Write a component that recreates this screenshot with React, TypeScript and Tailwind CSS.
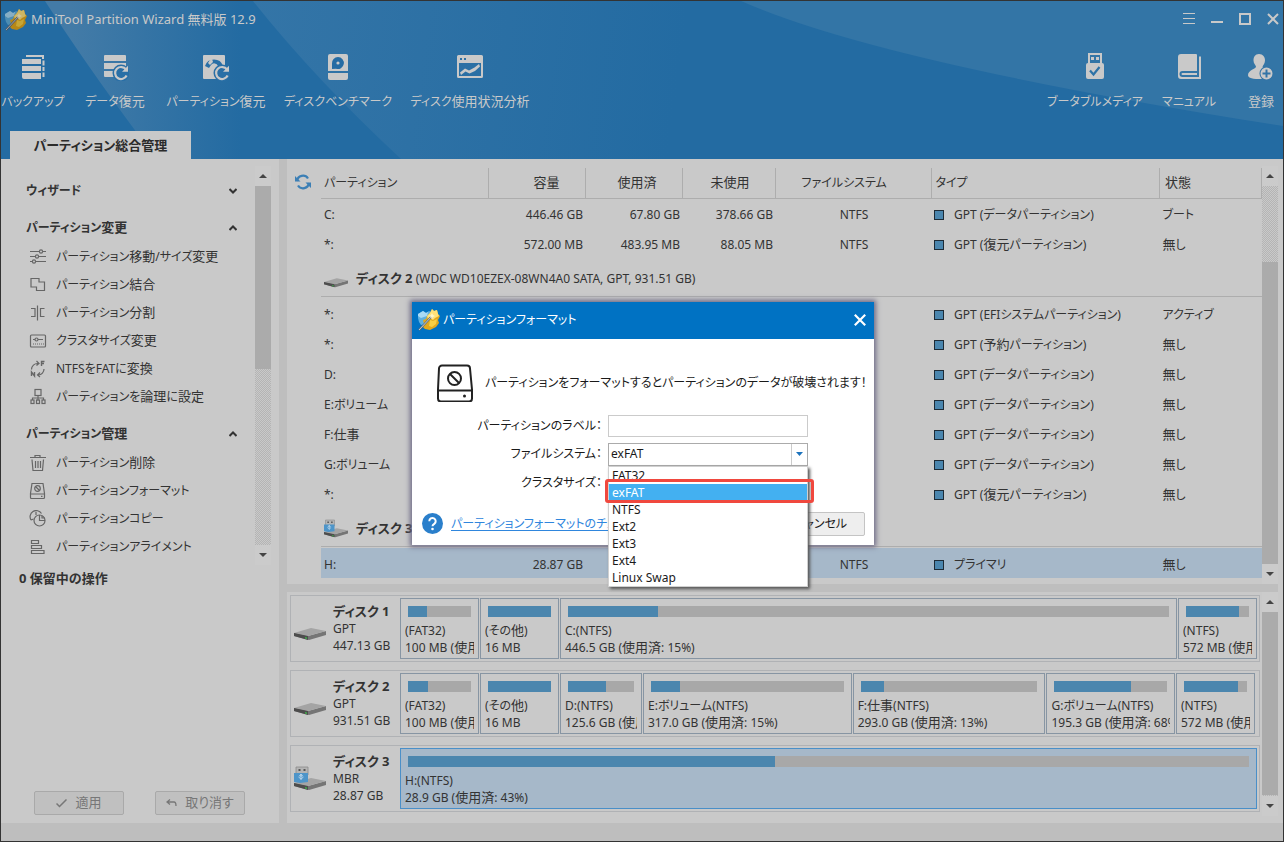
import React, { Fragment } from "react";
import type { ReactNode } from "react";

/* Kanji runs are set one pixel larger than the kana and Latin around them. */
function T({ children }: { children: string }) {
  const runs = children.split(/([\u4e00-\u9fff]+)/);
  return (
    <>
      {runs.map((run, i) =>
        i % 2 ? (
          <span key={i} className="text-[13px] leading-none">
            {run}
          </span>
        ) : (
          <Fragment key={i}>{run}</Fragment>
        ),
      )}
    </>
  );
}

function Logo({ bright = false }: { bright?: boolean }) {
  return (
    <svg width="24" height="24" viewBox="0 0 24 24" className={bright ? "shrink-0" : "shrink-0 brightness-80"} aria-hidden="true">
      <path d="M1 6l5-3 3 2 3-2 2 1v6l-4 6-6 1-2-3-1-4z" fill="#5fb0e0" />
      <path d="M1 6l5-3 3 2 2-1-1 4-6 2-3-2z" fill="#a9daf5" />
      <path d="M6 12l3-1 1-3 3-3 2-4 2 2 3-1 1 4 2 2-2 4 1 3-3 4-6 3-5-1-3-3 2-2z" fill="#e3a91c" />
      <path d="M10 8l3-3 2-4 2 2 3-1 1 4 1 2-4 2-2 2-3-2-2 1z" fill="#ffe27a" />
      <path d="M13 12l3 1 4-2-1 5-4 3-3-1z" fill="#f7cf43" />
      <path d="M2 22L15 8" stroke="#5e6a76" strokeWidth="2" />
      <path d="M2 22L15 8" stroke="#dfe7ee" strokeWidth=".8" />
      <path d="M15 5l1 2 2 1-2 1-1 2-1-2-2-1 2-1z" fill="#fff6c8" />
    </svg>
  );
}

function ToolIcon({ children }: { children: ReactNode }) {
  return (
    <svg width="28" height="28" viewBox="0 0 28 28" fill="#c9c9c9" aria-hidden="true">
      {children}
    </svg>
  );
}

const restoreArrow = (
  <>
    <circle cx="20" cy="20" r="8.5" fill="#296fa6" />
    <path d="M25 16.5A6 6 0 1 0 25.6 22.5" fill="none" stroke="#c9c9c9" strokeWidth="2.2" />
    <path d="M27 12.8v6h-6z" />
  </>
);

const toolsLeft: { label: string; width: string; icon: ReactNode }[] = [
  {
    label: "バックアップ",
    width: "w-[64px]",
    icon: (
      <>
        <path d="M7 2h18v4h-2V4H7z" />
        <path d="M3 6h19v5H3zM3 13h19v5H3zM3 20h19v6H5a2 2 0 0 1-2-2z" />
        <path d="M23.500 7.500H25.500v5h-2zM23.500 14H25.500v4h-2zM23.500 19.500H25.500V24h-2z" />
      </>
    ),
  },
  {
    label: "データ復元",
    width: "w-[100px]",
    icon: (
      <>
        <path d="M3 3a1 1 0 0 1 1-1h20a1 1 0 0 1 1 1v5H3zM3 10h22v6H3zM3 18h22v6H4a1 1 0 0 1-1-1z" />
        {restoreArrow}
      </>
    ),
  },
  {
    label: "パーティション復元",
    width: "w-[102px]",
    icon: (
      <>
        <path d="M1 3a1 1 0 0 1 1-1h20a1 1 0 0 1 1 1v23H2a1 1 0 0 1-1-1z" />
        <path d="M3 13a9.500 9.500 0 0 1 18 0h-5a4 4 0 0 0-7-1l-2 3z" fill="#296fa6" />
        <circle cx="12.500" cy="13" r="1.600" />
        <path d="M6 10a8 8 0 0 1 4-4l1 3-3 3z" />
        {restoreArrow}
      </>
    ),
  },
  {
    label: "ディスクベンチマーク",
    width: "w-[142px]",
    icon: (
      <>
        <path d="M4 3a2 2 0 0 1 2-2h16a2 2 0 0 1 2 2v15H4zM4 20h20v5a2 2 0 0 1-2 2H6a2 2 0 0 1-2-2z" />
        <path d="M14 4a6 6 0 1 1-2 11.700L8 16v-5.500A6 6 0 0 1 14 4z" fill="#256ca4" />
        <circle cx="14" cy="10" r="1.600" />
      </>
    ),
  },
  {
    label: "ディスク使用状況分析",
    width: "w-[122px]",
    icon: (
      <path
        fillRule="evenodd"
        d="M1 3.500A1.500 1.500 0 0 1 2.500 2h23A1.500 1.500 0 0 1 27 3.500v20a1.500 1.500 0 0 1-1.500 1.500h-23A1.500 1.500 0 0 1 1 23.500zM3 10v13h22V10zM4 5v2h2V5zM8 5v2h2V5zM4 19.500l5-4 4 2 5.500-3L23 11l1 2.500-5 4.500-5.500 2.500-4-2L5 22z"
      />
    ),
  },
];

const toolsRight: { label: string; width: string; icon: ReactNode }[] = [
  {
    label: "ブータブルメディア",
    width: "w-[106px]",
    icon: (
      <>
        <path fillRule="evenodd" d="M7 0h14v11H7zM9 2v8h10V2zM10 4h3v3h-3zM15 4h3v3h-3z" />
        <path d="M5 12a2 2 0 0 1 2-2h14a2 2 0 0 1 2 2v12a2 2 0 0 1-2 2H7a2 2 0 0 1-2-2z" />
        <path d="M9 17.500l3.500 4L18.500 14" fill="none" stroke="#2e72a6" strokeWidth="2.200" />
      </>
    ),
  },
  {
    label: "マニュアル",
    width: "w-[82px]",
    icon: (
      <path
        fillRule="evenodd"
        d="M3 4a3 3 0 0 1 3-3h15a1 1 0 0 1 1 1v16H7.500a3 3 0 0 0 0 6H24V3.500h2V26H6a3 3 0 0 1-3-3zM7.500 20H22v2H7.500a1 1 0 0 1 0-2z"
      />
    ),
  },
  {
    label: "登録",
    width: "w-[62px]",
    icon: (
      <>
        <path d="M12 1c4 0 6 3 6 6.500 0 3-2 4.500-2.500 6.500-.3 2 8.500 3 8.500 8 0 2-3 4-12 4S1 24 1 22c0-5 8-6 8-8.500C8.500 11.500 6.500 10.500 6.500 7.500 6.500 4 8 1 12 1z" />
        <circle cx="19.500" cy="20.500" r="7" fill="#3374a6" />
        <path
          fillRule="evenodd"
          d="M19.500 14.500a6 6 0 1 1 0 12 6 6 0 0 1 0-12zM18.500 16.500v3h-3v2h3v3h2v-3h3v-2h-3v-3z"
        />
      </>
    ),
  },
];

function ToolButton({ label, width, icon }: { label: string; width: string; icon: ReactNode }) {
  return (
    <button className={`flex flex-col items-center gap-3 whitespace-nowrap text-xs leading-[18px] ${width}`}>
      <ToolIcon>{icon}</ToolIcon>
      <span>
        <T>{label}</T>
      </span>
    </button>
  );
}

function Header() {
  return (
    <header className="relative bg-[#236ba2] text-[#c9c9c9]">
      <svg className="absolute inset-0 h-full w-full" viewBox="0 0 1282 158" preserveAspectRatio="none" aria-hidden="true">
        <defs>
          <linearGradient id="beamA" gradientUnits="userSpaceOnUse" x1="70" y1="0" x2="240" y2="0">
            <stop offset="0" stopColor="#437ba7" />
            <stop offset="1" stopColor="#236ba2" />
          </linearGradient>
          <linearGradient id="beamB" gradientUnits="userSpaceOnUse" x1="250" y1="0" x2="680" y2="60">
            <stop offset="0" stopColor="#3475a7" />
            <stop offset="1" stopColor="#236ba2" />
          </linearGradient>
        </defs>
        <path d="M44 0Q84 62 136 132L150 158H252V0z" fill="url(#beamA)" />
        <path d="M252 0Q314 78 400 158H700V0z" fill="url(#beamB)" />
        <path d="M740 0Q880 62 1282 125V0z" fill="#3375a6" />
      </svg>
      <div className="relative">
        <div className="flex h-9 items-center justify-between pr-1 pl-[3px]">
          <div className="flex items-center gap-[3px] pt-0.5 text-[13px]">
            <Logo />
            <h1>MiniTool Partition Wizard 無料版 12.9</h1>
          </div>
          <div className="flex gap-4">
            <button aria-label="メニュー">
              <svg width="12" height="12" viewBox="0 0 12 12" stroke="currentColor">
                <path d="M0 .5h12M0 5.500h12M0 10.500h12" />
              </svg>
            </button>
            <button aria-label="最小化">
              <svg width="12" height="12" viewBox="0 0 12 12" stroke="currentColor" strokeWidth="2">
                <path d="M0 9h12" />
              </svg>
            </button>
            <button aria-label="最大化">
              <svg width="12" height="12" viewBox="0 0 12 12" fill="none" stroke="currentColor" strokeWidth="2">
                <path d="M1 1h10v10H1z" />
              </svg>
            </button>
            <button aria-label="閉じる">
              <svg width="12" height="12" viewBox="0 0 12 12" stroke="currentColor" strokeWidth="2">
                <path d="M1 1l10 10M11 1L1 11" />
              </svg>
            </button>
          </div>
        </div>
        <div className="flex items-start justify-between pt-4">
          <div className="flex">
            {toolsLeft.map((t) => (
              <ToolButton key={t.label} {...t} />
            ))}
          </div>
          <div className="-mr-[9px] flex">
            {toolsRight.map((t) => (
              <ToolButton key={t.label} {...t} />
            ))}
          </div>
        </div>
        <div className="flex px-[9px] pt-5">
          <button className="h-7 w-[181px] bg-[#c9c9c9] pt-0.5 text-[13px] font-bold text-[#2b2b2b]">
            パーティション総合管理
          </button>
        </div>
      </div>
    </header>
  );
}

function SideIcon({ children }: { children: ReactNode }) {
  return (
    <svg
      width="18"
      height="18"
      viewBox="0 0 18 18"
      fill="none"
      stroke="#666"
      strokeWidth="1.200"
      className="shrink-0"
      aria-hidden="true"
    >
      {children}
    </svg>
  );
}

const changeItems: { label: string; icon: ReactNode }[] = [
  {
    label: "パーティション移動/サイズ変更",
    icon: (
      <>
        <path d="M1 3.500h9M14 3.500h3M1 8.500h5M10 8.500h7M1 13.500h2M7 13.500h10" />
        <circle cx="12" cy="3.500" r="1.600" />
        <circle cx="8" cy="8.500" r="1.600" />
        <circle cx="5" cy="13.500" r="1.600" />
      </>
    ),
  },
  { label: "パーティション結合", icon: <path d="M2 2.500h8v3.500h5.500v8.500h-8V11H2z" /> },
  {
    label: "パーティション分割",
    icon: <path d="M8.500 1.500v15M2 4.500h4v8H2M15.500 4.500h-4v8h4" />,
  },
  {
    label: "クラスタサイズ変更",
    icon: (
      <>
        <rect x="1.500" y="3" width="15" height="12" rx="1" />
        <path d="M4 7.500h2M9 7.500h5" />
        <circle cx="7.500" cy="7.500" r="1.500" />
        <path d="M4 12h11" strokeDasharray="1 1" />
      </>
    ),
  },
  {
    label: "NTFSをFATに変換",
    icon: (
      <>
        <path d="M2.500 9.500A6 6 0 0 1 9 3.500M7.500 1l2.500 2.500-2.500 2M15 9a6 6 0 0 1-5.500 6M11 12.500L8.500 15l2.500 2" />
        <path d="M12.500 6V1.500h3M12.500 3.500h2.500M2.500 16v-4l3 4v-4" strokeWidth="1.400" />
      </>
    ),
  },
  {
    label: "パーティションを論理に設定",
    icon: (
      <>
        <rect x="6" y="1.500" width="6" height="6" />
        <path d="M9 7.500v5M3.500 12v-2h11v2" />
        <rect x="2" y="12" width="3" height="3.500" />
        <rect x="7.500" y="12" width="3" height="3.500" />
        <rect x="13" y="12" width="3" height="3.500" />
      </>
    ),
  },
];

const manageItems: { label: string; icon: ReactNode }[] = [
  {
    label: "パーティション削除",
    icon: <path d="M1 3.500h16M6 3.500v-2h5v2M3 5.500l1 11h9.500l1-11M6.500 7v7M9 7v7M11.500 7v7" />,
  },
  {
    label: "パーティションフォーマット",
    icon: (
      <>
        <path d="M3 1.500h11l1.500 10v4a1 1 0 0 1-1 1h-12a1 1 0 0 1-1-1v-4zM1.500 12h14M12 14.300h1.500" />
        <circle cx="8.500" cy="6.500" r="2.800" />
        <path d="M6.500 4.500l4 4" />
      </>
    ),
  },
  {
    label: "パーティションコピー",
    icon: (
      <>
        <path d="M2 10A5.500 5.500 0 0 1 12.500 3.500M2 10l2.500-1M7 2v3" />
        <circle cx="10.500" cy="10.500" r="5.500" />
        <path d="M10.500 5v5.500H16M13 5.500v2.500h3" />
      </>
    ),
  },
  {
    label: "パーティションアライメント",
    icon: <path d="M2.500 2.500h7v3h-7zM2.500 7.500h10v3h-10zM2.500 12.500h12.500v3H2.500z" />,
  },
];

function Chevron({ up }: { up?: boolean }) {
  return (
    <svg width="8" height="6" viewBox="0 0 8 6" fill="none" stroke="#333" strokeWidth="2" aria-hidden="true">
      <path d={up ? "M.5 5L4 1.500 7.500 5" : "M.5 1L4 4.500 7.500 1"} />
    </svg>
  );
}

function Section({ title, items }: { title: string; items?: { label: string; icon: ReactNode }[] }) {
  return (
    <section>
      <button className="flex h-7 w-full items-center justify-between pr-[18px] text-left font-bold">
        <span>
          <T>{title}</T>
        </span>
        <Chevron up={!!items} />
      </button>
      {items && (
        <ul className="mt-px pl-[3px]">
          {items.map((it) => (
            <li key={it.label}>
              <button className="flex h-7 w-full items-center gap-[9px] whitespace-nowrap text-left">
                <SideIcon>{it.icon}</SideIcon>
                <span>
                  <T>{it.label}</T>
                </span>
              </button>
            </li>
          ))}
        </ul>
      )}
    </section>
  );
}

function Triangle({ down }: { down?: boolean }) {
  return (
    <div className="flex h-5 shrink-0 items-center justify-center bg-[#cbcbcb]">
      <svg width="8" height="4" viewBox="0 0 8 4" fill="#444" aria-hidden="true">
        <path d={down ? "M0 0h8L4 4z" : "M0 4h8L4 0z"} />
      </svg>
    </div>
  );
}

const ditherClass =
  "w-full bg-[repeating-conic-gradient(#b4b4b4_0_25%,#c9c9c9_0_50%)] bg-[length:2px_2px]";

function ScrollBar({ before, thumb, after }: { before: number; thumb: number; after: number }) {
  return (
    <div className="flex w-4 shrink-0 flex-col" aria-hidden="true">
      <Triangle />
      <div className={ditherClass} style={{ flex: `${before} 0 0px` }} />
      <div className="w-full bg-[#ababab]" style={{ flex: `${thumb} 0 0px` }} />
      <div className={ditherClass} style={{ flex: `${after} 0 0px` }} />
      <Triangle down />
    </div>
  );
}

function Sidebar() {
  return (
    <aside className="flex w-[278px] shrink-0 flex-col">
      <div className="mt-[7px] flex pr-2">
        <nav className="flex flex-1 flex-col gap-[9px] pt-[11px] pb-1 pl-[25px] text-xs">
          <Section title="ウィザード" />
          <Section title="パーティション変更" items={changeItems} />
          <Section title="パーティション管理" items={manageItems} />
        </nav>
        <ScrollBar before={0} thumb={184} after={176} />
      </div>
      <p className="mt-px pl-[18px] text-[13px] leading-6 font-bold">0 保留中の操作</p>
      <div className="mt-auto mb-2 flex gap-[31px] pl-[33px] text-[13px] text-[#777]">
        <button className="flex h-6 w-[90px] items-center justify-center gap-2 rounded-xs border border-[#a9a9a9] bg-[#c0c0c0]">
          <svg width="11" height="9" viewBox="0 0 11 9" fill="none" stroke="currentColor" strokeWidth="1.500" aria-hidden="true">
            <path d="M.5 4.500l3 3 7-7" />
          </svg>
          適用
        </button>
        <button className="flex h-6 w-[90px] items-center justify-center gap-2 rounded-xs border border-[#a9a9a9] bg-[#c0c0c0]">
          <svg width="11" height="8" viewBox="0 0 11 8" fill="none" stroke="currentColor" strokeWidth="1.300" aria-hidden="true">
            <path d="M4 .5L1 3l3 2.500M1 3h7q2 0 2 4" />
          </svg>
          取り消す
        </button>
      </div>
    </aside>
  );
}

function DriveIcon({ usb, className }: { usb?: boolean; className: string }) {
  return (
    <svg viewBox="0 0 32 26" className={className} aria-hidden="true">
      <path d="M0 17l14 3 18-5v4l-17 5-15-4z" fill="#757575" />
      <path d="M0 17l17-5 15 3-18 5z" fill="#a4a4a4" />
      <path d="M0 17l14 3v4L0 20z" fill="#4d4d4d" />
      <path d="M11 21l2 .5v1.500l-2-.5z" fill="#3fae49" />
      {usb && (
        <>
          <path d="M2 1h12v8H2z" fill="#b5b5b5" stroke="#8b8b8b" strokeWidth=".8" />
          <path d="M4.500 3h2v2h-2zM9.500 3h2v2h-2z" fill="#555" />
          <path d="M0 7h14v9l-8 1-6-1z" fill="#4e95c9" />
          <path d="M7 8v6M7 8l-1.500 2h3zM4.500 11l2.500 2 2.500-2" stroke="#b7d4ea" fill="none" />
        </>
      )}
    </svg>
  );
}

type Row = { name: string; size?: string; used?: string; free?: string; fs?: string; type: string; state: string };

const disk1Rows: Row[] = [
  { name: "C:", size: "446.46 GB", used: "67.80 GB", free: "378.66 GB", fs: "NTFS", type: "GPT (データパーティション)", state: "ブート" },
  { name: "*:", size: "572.00 MB", used: "483.95 MB", free: "88.05 MB", fs: "NTFS", type: "GPT (復元パーティション)", state: "無し" },
];
const disk2Rows: Row[] = [
  { name: "*:", type: "GPT (EFIシステムパーティション)", state: "アクティブ" },
  { name: "*:", type: "GPT (予約パーティション)", state: "無し" },
  { name: "D:", type: "GPT (データパーティション)", state: "無し" },
  { name: "E:ボリューム", type: "GPT (データパーティション)", state: "無し" },
  { name: "F:仕事", type: "GPT (データパーティション)", state: "無し" },
  { name: "G:ボリューム", type: "GPT (データパーティション)", state: "無し" },
  { name: "*:", type: "GPT (復元パーティション)", state: "無し" },
];
const disk3Rows: Row[] = [{ name: "H:", size: "28.87 GB", fs: "NTFS", type: "プライマリ", state: "無し" }];

function PartRow({ row, selected }: { row: Row; selected?: boolean }) {
  return (
    <tr className={selected ? "h-[30px] bg-[#a6b8c9]" : "h-[30px]"}>
      <td className="pt-[3px] pl-[3px]">
        <T>{row.name}</T>
      </td>
      <td className="pt-[3px] pr-0.5 text-right">{row.size}</td>
      <td className="pt-[3px] pr-0.5 text-right">{row.used}</td>
      <td className="pt-[3px] pr-0.5 text-right">{row.free}</td>
      <td className="pt-[3px] pl-0.5 text-center">{row.fs}</td>
      <td className="pt-[3px] pl-[3px]">
        <div className="flex items-center gap-2.5">
          <span className="h-2.5 w-2.5 shrink-0 border border-[#1d2a35] bg-[#4b86ae]" />
          <span className="whitespace-nowrap">
            <T>{row.type}</T>
          </span>
        </div>
      </td>
      <td className="pt-[3px] pl-[3px]">
        <T>{row.state}</T>
      </td>
    </tr>
  );
}

function GroupRow({ name, info, usb }: { name: string; info: string; usb?: boolean }) {
  return (
    <tr className="h-10">
      <td colSpan={7} className="pb-px">
        <div className="flex h-[38px] items-center gap-2 border-b border-[#adadad] pt-1 pl-[3px]">
          <DriveIcon usb={usb} className="h-5 w-6" />
          <span>
            <b className="text-[13px]">{name}</b> {info}
          </span>
        </div>
      </td>
    </tr>
  );
}

function PartitionTable() {
  return (
    <div className="flex">
      <div className="flex min-w-0 flex-1">
        <button className="mt-[15px] ml-2 h-4 w-[26px] shrink-0" aria-label="最新の情報に更新">
          <svg width="16" height="16" viewBox="0 0 16 16" fill="none" stroke="#3c7fb5" strokeWidth="2.200">
            <path d="M2 7a6 6 0 0 1 11-2.500M14 9A6 6 0 0 1 3 11.500" />
            <path d="M0 2v5.500h5.500zM16 14V8.500h-5.500z" fill="#3c7fb5" stroke="none" />
          </svg>
        </button>
        <table className="mt-[9px] min-w-0 flex-1 table-fixed border-collapse text-xs">
          <colgroup>
            <col className="w-[167px]" />
            <col className="w-[97px]" />
            <col className="w-[97px]" />
            <col className="w-[93px]" />
            <col className="w-[156px]" />
            <col />
            <col className="w-[102px]" />
          </colgroup>
          <thead>
            <tr className="h-[30px] border-b border-[#adadad] text-left [&>th]:border-r [&>th]:border-[#adadad] [&>th]:pt-px [&>th]:font-normal">
              <th className="pl-[3px]">パーティション</th>
              <th className="pr-[25px] text-right">
                <T>容量</T>
              </th>
              <th className="pr-[25px] text-right">
                <T>使用済</T>
              </th>
              <th className="pr-[25px] text-right">
                <T>未使用</T>
              </th>
              <th className="pl-[26px]">ファイルシステム</th>
              <th className="pl-1">タイプ</th>
              <th className="pl-[5px]">
                <T>状態</T>
              </th>
            </tr>
          </thead>
          <tbody>
            {disk1Rows.map((r, i) => (
              <PartRow key={i} row={r} />
            ))}
            <GroupRow name="ディスク 2" info="(WDC WD10EZEX-08WN4A0 SATA, GPT, 931.51 GB)" />
            {disk2Rows.map((r, i) => (
              <PartRow key={i} row={r} />
            ))}
            <GroupRow name="ディスク 3" info="" usb />
            {disk3Rows.map((r, i) => (
              <PartRow key={i} row={r} selected />
            ))}
          </tbody>
        </table>
      </div>
      <div className="mt-[7px] mr-[5px] -mb-1.5 flex">
        <ScrollBar before={76} thumb={303} after={0} />
      </div>
    </div>
  );
}

type Part = { label: string; info: string; used: number; grow: string };
type Disk = { name: string; style: string; size: string; usb?: boolean; pad: string; parts: Part[] };

const disks: Disk[] = [
  {
    name: "ディスク 1",
    style: "GPT",
    size: "447.13 GB",
    pad: "pr-0.5",
    parts: [
      { label: "(FAT32)", info: "100 MB (使用済: 30%)", used: 30, grow: "w-[79px]" },
      { label: "(その他)", info: "16 MB", used: 100, grow: "w-[79px]" },
      { label: "C:(NTFS)", info: "446.5 GB (使用済: 15%)", used: 15, grow: "flex-1" },
      { label: "(NTFS)", info: "572 MB (使用済: 84%)", used: 84, grow: "w-[79px]" },
    ],
  },
  {
    name: "ディスク 2",
    style: "GPT",
    size: "931.51 GB",
    pad: "pr-1",
    parts: [
      { label: "(FAT32)", info: "100 MB (使用済: 32%)", used: 32, grow: "w-[79px]" },
      { label: "(その他)", info: "16 MB", used: 100, grow: "w-[79px]" },
      { label: "D:(NTFS)", info: "125.6 GB (使用済: 58%)", used: 58, grow: "w-[82px]" },
      { label: "E:ボリューム(NTFS)", info: "317.0 GB (使用済: 15%)", used: 15, grow: "flex-[209_0_0]" },
      { label: "F:仕事(NTFS)", info: "293.0 GB (使用済: 13%)", used: 13, grow: "flex-[193_0_0]" },
      { label: "G:ボリューム(NTFS)", info: "195.3 GB (使用済: 68%)", used: 68, grow: "flex-[128_0_0]" },
      { label: "(NTFS)", info: "572 MB (使用済: 86%)", used: 86, grow: "w-[79px]" },
    ],
  },
  {
    name: "ディスク 3",
    style: "MBR",
    size: "28.87 GB",
    usb: true,
    pad: "pr-0.5",
    parts: [{ label: "H:(NTFS)", info: "28.9 GB (使用済: 43%)", used: 43.6, grow: "flex-1" }],
  },
];

function DiskMap() {
  return (
    <div className="flex">
      <div className="flex min-w-0 flex-1 flex-col gap-2 pt-[3px] pr-0.5 pl-[3px]">
        {disks.map((d) => (
          <div key={d.name} className={`flex h-[67px] items-center border border-[#b0b2b5] text-xs leading-[17px] ${d.pad}`}>
            <DriveIcon usb={d.usb} className="ml-[3px] h-[26px] w-8 shrink-0" />
            <div className="w-[74px] shrink-0 pl-[7px]">
              <p className="text-[13px] leading-[17px] font-bold">{d.name}</p>
              <p>{d.style}</p>
              <p>{d.size}</p>
            </div>
            <div className="flex min-w-0 flex-1 gap-px">
              {d.parts.map((p, i) => (
                <div
                  key={i}
                  className={`h-[61px] min-w-0 border pt-[7px] ${p.grow} ${
                    d.usb ? "border-[#4a8fc8] bg-[#a6b8c9]" : "border-[#8795a3]"
                  }`}
                >
                  <div className="mx-[7px] mb-[5px] h-[11px] bg-[#a8a8a8]">
                    <div className="h-full bg-[#4b86ae]" style={{ width: `${p.used}%` }} />
                  </div>
                  <div className="mr-1 ml-1 overflow-hidden whitespace-nowrap">
                    <p>
                      <T>{p.label}</T>
                    </p>
                    <p>
                      <T>{p.info}</T>
                    </p>
                  </div>
                </div>
              ))}
            </div>
          </div>
        ))}
      </div>
      <div className="mr-[5px] -mb-1 flex">
        <ScrollBar before={0} thumb={184} after={1} />
      </div>
    </div>
  );
}

const fileSystems = ["FAT32", "exFAT", "NTFS", "Ext2", "Ext3", "Ext4", "Linux Swap"];

function FormatDialog() {
  return (
    <div className="absolute inset-0 flex items-center justify-center pt-1 pl-0.5">
      <form
        role="dialog"
        aria-labelledby="format-title"
        className="w-[462px] bg-white text-xs text-[#1a1a1a] shadow-[0_0_5px_2px_#6d6a86]"
      >
        <div className="flex h-[37px] items-center bg-[#0072c3] pr-2 pl-[5px] text-white">
          <Logo bright />
          <h2 id="format-title" className="ml-0.5 flex-1">
            パーティションフォーマット
          </h2>
          <button type="button" aria-label="閉じる">
            <svg width="12" height="12" viewBox="0 0 12 12" stroke="currentColor" strokeWidth="2.200">
              <path d="M.8 .8l10.400 10.400M11.200 .8L.8 11.200" />
            </svg>
          </button>
        </div>
        <div className="flex items-center gap-3 pt-[25px] pl-[24px]">
          <svg width="37" height="38" viewBox="0 0 37 38" fill="none" stroke="#222" strokeWidth="2" className="shrink-0" aria-hidden="true">
            <path d="M6 1.500h25a3 3 0 0 1 3 3l2 21v9a3 3 0 0 1-3 3H5a3 3 0 0 1-3-3v-9l1-21a3 3 0 0 1 3-3zM2 26.500h34" />
            <circle cx="18.500" cy="14.500" r="6.500" />
            <path d="M14 10l9 9" />
            <circle cx="28.500" cy="32" r="1.500" fill="#222" stroke="none" />
          </svg>
          <p className="whitespace-nowrap">パーティションをフォーマットするとパーティションのデータが破壊されます！</p>
        </div>
        <div className="mt-[13px] grid grid-cols-[190px_200px] items-center gap-x-1.5 gap-y-1.5">
          <label htmlFor="label" className="text-right">
            パーティションのラベル：
          </label>
          <input id="label" type="text" className="h-[22px] w-full border border-[#cbcbcb] bg-white px-1 outline-none" />
          <label htmlFor="fs" className="text-right">
            ファイルシステム：
          </label>
          <div className="relative">
            <select
              id="fs"
              defaultValue="exFAT"
              className="block h-[23px] w-full appearance-none border border-[#ababab] bg-white pl-0.5 text-xs outline-none"
            >
              {fileSystems.map((f) => (
                <option key={f}>{f}</option>
              ))}
            </select>
            <div className="pointer-events-none absolute top-px right-px flex h-[21px] w-4 items-center justify-center border-l border-[#cbcbcb]">
              <svg width="7" height="4" viewBox="0 0 7 4" fill="#1c73bd" aria-hidden="true">
                <path d="M0 0h7L3.500 4z" />
              </svg>
            </div>
            <ul
              role="listbox"
              aria-label="ファイルシステム"
              className="absolute top-[23px] left-0 z-10 w-full border border-[#d0d0d0] bg-white text-xs leading-[17px] shadow-[2px_2px_3px_#555]"
            >
              {fileSystems.map((f) => (
                <li
                  key={f}
                  role="option"
                  aria-selected={f === "exFAT"}
                  className={f === "exFAT" ? "bg-[#43b0f1] px-[3px] text-white" : "px-[3px]"}
                >
                  {f}
                </li>
              ))}
            </ul>
            <div className="absolute top-[36px] -right-1.5 -left-[3px] z-20 h-6 rounded-[3px] border-3 border-[#f0483e]" />
          </div>
          <label htmlFor="cluster" className="text-right">
            クラスタサイズ：
          </label>
          <select id="cluster" className="h-[22px] w-full appearance-none border border-[#ababab] bg-white" />
        </div>
        <div className="mt-[18px] flex items-center justify-between pr-[9px] pb-[9px] pl-2.5">
          <div className="flex items-center gap-2">
            <svg width="21" height="21" viewBox="0 0 21 21" aria-hidden="true">
              <circle cx="10.500" cy="10.500" r="10.500" fill="#2a7fcb" />
              <path d="M7.300 8.200a3.200 3.200 0 1 1 5 2.600c-1.200.8-1.800 1.200-1.800 2.500" fill="none" stroke="#fff" strokeWidth="2" />
              <circle cx="10.500" cy="16" r="1.300" fill="#fff" />
            </svg>
            <a href="#tutorial" className="text-[#2f86dd] underline underline-offset-2">
              パーティションフォーマットのチュートリアル
            </a>
          </div>
          <button type="button" className="h-6 w-[90px] rounded-xs border border-[#c4c4c4] bg-[#eee]">
            キャンセル
          </button>
        </div>
      </form>
    </div>
  );
}

export default function App() {
  return (
    <div className="relative flex min-h-screen flex-col border border-[#333] bg-[#c9c9c9] font-['Noto_Sans','Noto_Sans_CJK_JP',sans-serif] text-[#333] [font-feature-settings:'palt']">
      <Header />
      <div className="flex flex-1">
        <Sidebar />
        <main className="flex min-w-0 flex-1 flex-col border-l-8 border-[#bebebe]">
          <PartitionTable />
          <div className="mt-1.5 mr-[5px] h-2 bg-[#bebebe]" />
          <DiskMap />
        </main>
      </div>
      <footer className="h-[18px] bg-[#bebebe]" />
      <FormatDialog />
    </div>
  );
}
